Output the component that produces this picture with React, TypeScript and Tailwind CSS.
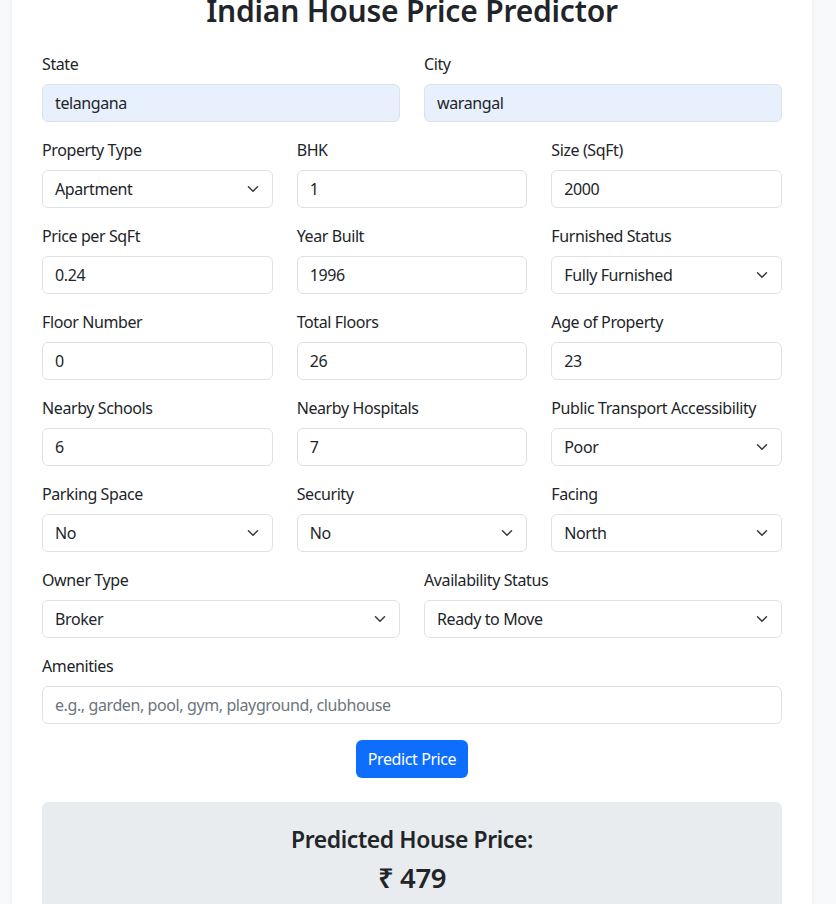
import { useState } from "react";

type Field =
  | { kind: "input"; label: string; value?: string; placeholder?: string; filled?: boolean }
  | { kind: "select"; label: string; value: string; options: string[] };

const font = { fontFamily: '"Noto Sans", "Liberation Sans", sans-serif' };

function Chevron() {
  return (
    <svg
      className="pointer-events-none absolute right-[12px] top-1/2 -translate-y-1/2"
      width="16"
      height="12"
      viewBox="0 0 16 16"
      fill="none"
    >
      <path d="m2 5 6 6 6-6" stroke="#343a40" strokeWidth="2" strokeLinecap="round" strokeLinejoin="round" />
    </svg>
  );
}

function FormField({ field }: { field: Field }) {
  const [value, setValue] = useState(field.kind === "input" ? field.value ?? "" : field.value);

  return (
    <div className="mb-4 min-w-0">
      <label className="mb-2 block text-[16px] leading-6 text-[#212529]">{field.label}</label>
      {field.kind === "input" ? (
        <input
          value={value}
          placeholder={field.placeholder}
          onChange={(e) => setValue(e.target.value)}
          className={`block h-[38px] w-full rounded-[6px] border border-[#dee2e6] px-3 text-[16px] leading-6 tracking-[-0.4px] text-[#212529] placeholder:text-[#6c757d] outline-none ${
            field.filled ? "bg-[#e8f0fe]" : "bg-white"
          }`}
        />
      ) : (
        <div className="relative">
          <select
            value={value}
            onChange={(e) => setValue(e.target.value)}
            className="block h-[38px] w-full appearance-none rounded-[6px] border border-[#dee2e6] bg-white pl-3 pr-9 text-[16px] leading-6 tracking-[-0.4px] text-[#212529] outline-none"
          >
            {field.options.map((o) => (
              <option key={o}>{o}</option>
            ))}
          </select>
          <Chevron />
        </div>
      )}
    </div>
  );
}

const rowOne: Field[] = [
  { kind: "input", label: "State", value: "telangana", filled: true },
  { kind: "input", label: "City", value: "warangal", filled: true },
];

const threeCols: Field[] = [
  { kind: "select", label: "Property Type", value: "Apartment", options: ["Apartment", "Independent House", "Villa"] },
  { kind: "input", label: "BHK", value: "1" },
  { kind: "input", label: "Size (SqFt)", value: "2000" },
  { kind: "input", label: "Price per SqFt", value: "0.24" },
  { kind: "input", label: "Year Built", value: "1996" },
  { kind: "select", label: "Furnished Status", value: "Fully Furnished", options: ["Fully Furnished", "Semi-furnished", "Unfurnished"] },
  { kind: "input", label: "Floor Number", value: "0" },
  { kind: "input", label: "Total Floors", value: "26" },
  { kind: "input", label: "Age of Property", value: "23" },
  { kind: "input", label: "Nearby Schools", value: "6" },
  { kind: "input", label: "Nearby Hospitals", value: "7" },
  { kind: "select", label: "Public Transport Accessibility", value: "Poor", options: ["High", "Medium", "Low", "Poor"] },
  { kind: "select", label: "Parking Space", value: "No", options: ["Yes", "No"] },
  { kind: "select", label: "Security", value: "No", options: ["Yes", "No"] },
  { kind: "select", label: "Facing", value: "North", options: ["North", "South", "East", "West"] },
];

const rowLast: Field[] = [
  { kind: "select", label: "Owner Type", value: "Broker", options: ["Owner", "Builder", "Broker"] },
  { kind: "select", label: "Availability Status", value: "Ready to Move", options: ["Ready to Move", "Under Construction"] },
];

export default function App() {
  const [price] = useState(479);

  return (
    <div className="min-h-screen overflow-hidden bg-[#f8f9fa] tracking-[-0.4px]" style={font}>
      <div className="-mt-[36px] ml-3 w-[800px] bg-white px-[30px] pt-[30px] pb-10 shadow-[0_2px_6px_rgba(0,0,0,0.06)]">
        <h2 className="mb-6 text-center text-[30px] font-semibold leading-[34.4px] tracking-[-0.2px] text-[#212529]">
          Indian House Price Predictor
        </h2>

        <div className="grid grid-cols-2 gap-x-6">
          {rowOne.map((f) => (
            <FormField key={f.label} field={f} />
          ))}
        </div>

        <div className="grid grid-cols-3 gap-x-6">
          {threeCols.map((f) => (
            <FormField key={f.label} field={f} />
          ))}
        </div>

        <div className="grid grid-cols-2 gap-x-6">
          {rowLast.map((f) => (
            <FormField key={f.label} field={f} />
          ))}
        </div>

        <FormField
          field={{ kind: "input", label: "Amenities", placeholder: "e.g., garden, pool, gym, playground, clubhouse" }}
        />

        <div className="flex justify-center">
          <button className="h-[38px] rounded-[6px] bg-[#0d6efd] px-3 text-[16px] leading-6 text-white">
            Predict Price
          </button>
        </div>

        <div className="mt-6 rounded-[6px] bg-[#e9ecef] px-6 pt-6 pb-10 text-center text-[#212529]">
          <h4 className="mb-2 text-[22.9px] font-semibold leading-[27.5px]">Predicted House Price:</h4>
          <h3 className="text-[27.5px] font-semibold leading-[31px]">₹ {price}</h3>
        </div>
      </div>
    </div>
  );
}
